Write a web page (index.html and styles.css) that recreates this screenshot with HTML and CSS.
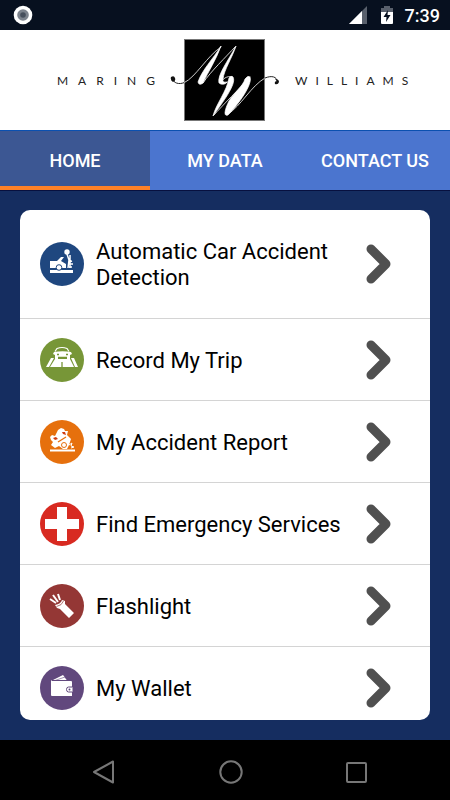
FILE: index.html
```html
<!DOCTYPE html>
<html lang="en">
<head>
<meta charset="utf-8">
<meta name="viewport" content="width=device-width, initial-scale=1">
<title>Maring Williams</title>
<link rel="stylesheet" href="styles.css">
</head>
<body>
<div class="status">
  <svg class="status-record" width="20" height="20" viewBox="0 0 20 20" aria-hidden="true"><circle cx="10" cy="10" r="9.3" fill="#fff"/><circle cx="10" cy="10" r="5.8" fill="#7c838d"/><circle cx="10" cy="10" r="2.8" fill="#464f5c"/></svg>
  <svg width="18" height="18" viewBox="0 0 18 18" aria-hidden="true"><path d="M18 0V18H0Z" fill="#59606c"/><path d="M13 5V18H0Z" fill="#fff"/></svg>
  <svg class="status-battery" width="12" height="18" viewBox="0 0 12 18" aria-hidden="true"><path d="M3 0H9V2H12V7H0V2H3Z" fill="#59606c"/><path d="M0 6H12V17Q12 18 11 18H1Q0 18 0 17Z" fill="#fff"/><path d="M7 4 2.5 11H5.5L5 16 9.5 9H6.5Z" fill="#07101f"/></svg>
  <time class="clock">7:39</time>
</div>
<header class="brand">
  <span class="brand-name brand-left">MARING</span>
  <svg class="monogram" width="110" height="84" viewBox="170 38 110 84" aria-hidden="true">
    <rect x="184.500" y="39.500" width="80" height="81" fill="#000" stroke="#777"/>
    <g fill="none" stroke-linecap="round" stroke-linejoin="round">
      <path d="M173 79C173 83 179 85 184.500 82.500" stroke="#222" stroke-width="1"/>
      <path d="M184.500 82.500C196 77 207 56 221 47" stroke="#ccc" stroke-width="1"/>
      <path d="M203 83C211 71 226 57 235 47M226 83C229 82 230 79 232 77" stroke="#ccc" stroke-width="1"/>
      <path d="M214 115C222 106 240 88 250 77M228 114C241 106 251 86 265 78M221 84C221 79 228 75 232 77" stroke="#ccc" stroke-width="1"/>
      <path d="M265 78C272 75 277 77 277 81" stroke="#222" stroke-width="1"/>
    </g>
    <g fill="#fff" stroke="#fff" stroke-width=".7" stroke-linejoin="round">
      <path d="M221 46C216 60 208 72 203 83Q199 86 198 82C202 70 213 59 221 46Z"/>
      <path d="M236 46C232 58 224 70 223 79Q222 83 227 82Q224 86 219 83C217 75 228 61 236 46Z"/>
      <path d="M233 77C237 84 222 103 213 116C216 104 227 91 229 78Q231 75 233 77Z"/>
      <path d="M250 77C253 84 238 105 228 115C223 117 225 109 229 101C234 93 243 86 245 79Q248 75 250 77Z"/>
    </g>
    <path d="M171 77Q174 75 175 78Q176 81 173 82Q170 80 171 77ZM275 79Q279 79 279 82Q278 85 275 84Q274 81 277 81Z" fill="#111"/>
  </svg>
  <span class="brand-name brand-right">WILLIAMS</span>
</header>
<nav class="tabs" aria-label="Sections">
  <a class="tab tab-active" href="#home" aria-current="page">HOME</a>
  <a class="tab" href="#data">MY DATA</a>
  <a class="tab" href="#contact">CONTACT US</a>
</nav>
<main class="content">
  <ul class="menu">
    <li><a class="item item-tall" href="#detection">
      <svg class="icon" viewBox="0 0 44 44" aria-hidden="true"><circle cx="22" cy="22" r="22" fill="#1f477f"/><path d="M10 19H17L21 15H24L21 19 26 22V26H10ZM10 28H33V31H10Z" fill="#fff"/><circle cx="19" cy="25.500" r="2.800" fill="#fff" stroke="#1f477f"/><circle cx="27" cy="10" r="2.700" fill="#fff"/><path d="M27 12 29 18 28 26M30 13V19M29 20 32 19M29 22H33M29 25H32M30 20V26" stroke="#fff" stroke-width="1.500" fill="none"/></svg>
      <span class="label">Automatic Car Accident Detection</span>
      <svg class="chevron" viewBox="0 0 26 42" aria-hidden="true"><path d="M5 6 20 21 5 36"/></svg></a></li>
    <li><a class="item" href="#trip">
      <svg class="icon" viewBox="0 0 44 44" aria-hidden="true"><circle cx="22" cy="22" r="22" fill="#779637"/><path d="M11 20H14L9 29H6ZM31 20H34L38 29H35Z" fill="#fff"/><path d="M15 21H30L34 29H10Z" fill="#fff"/><path d="M15 13.500 17 10.500Q22 8.500 27 10.500L29 13.500" fill="none" stroke="#fff" stroke-width="1.200"/><path d="M14 14Q22.500 12.500 31 14L32 16 30 17V22H27V20H18V22H15V17L13 16Z" fill="#fff"/><path d="M17 16.500H19M26 16.500H28M18 19.500H27M22 24V29" stroke="#779637" stroke-width="1.300"/></svg>
      <span class="label">Record My Trip</span>
      <svg class="chevron" viewBox="0 0 26 42" aria-hidden="true"><path d="M5 6 20 21 5 36"/></svg></a></li>
    <li><a class="item" href="#report">
      <svg class="icon" viewBox="0 0 44 44" aria-hidden="true"><circle cx="22" cy="22" r="22" fill="#e6700d"/><path d="M10 29.500H35V31.500H10Z" fill="#fff"/><path d="M10 17 12 15 15 16 18 10 21 8 24 9 25 11 28 11 27 15 31 19 29 25 27 29H23L19 26 15 28 11 25 13 22 11 20Z" fill="#fff"/><path d="M13 18 16 17 18 19 15 20ZM22 12 25 12 26 15 23 14Z" fill="#cf3b10"/><path d="M18 22 26 17" stroke="#e6700d" stroke-width="1.300"/><circle cx="24" cy="25" r="2.500" fill="none" stroke="#e6700d"/><path d="M29 25 32 23 31 26 34 27 31 28" stroke="#fff" fill="none"/></svg>
      <span class="label">My Accident Report</span>
      <svg class="chevron" viewBox="0 0 26 42" aria-hidden="true"><path d="M5 6 20 21 5 36"/></svg></a></li>
    <li><a class="item" href="#emergency">
      <svg class="icon" viewBox="0 0 44 44" aria-hidden="true"><circle cx="22" cy="22" r="22" fill="#d82a21"/><path d="M17 5H27V17H39V27H27V39H17V27H5V17H17Z" fill="#fff"/></svg>
      <span class="label">Find Emergency Services</span>
      <svg class="chevron" viewBox="0 0 26 42" aria-hidden="true"><path d="M5 6 20 21 5 36"/></svg></a></li>
    <li><a class="item" href="#flashlight">
      <svg class="icon" viewBox="0 0 44 44" aria-hidden="true"><circle cx="22" cy="22" r="22" fill="#943735"/><path d="M15 21Q21 20 22 16L25 17 25 20 34 29 29 34 20 25 17 24Z" fill="#fff"/><path d="M10 15 16 19M13 11 18 18M18 10 20 16" stroke="#fff" stroke-width="2"/><path d="M16.500 22.500Q22 21.500 23.500 17" stroke="#943735" stroke-width=".7" fill="none"/></svg>
      <span class="label">Flashlight</span>
      <svg class="chevron" viewBox="0 0 26 42" aria-hidden="true"><path d="M5 6 20 21 5 36"/></svg></a></li>
    <li><a class="item" href="#wallet">
      <svg class="icon" viewBox="0 0 44 44" aria-hidden="true"><circle cx="22" cy="22" r="22" fill="#61487d"/><path d="M13 14 23 9 27 14Z" fill="#fff"/><path d="M15 14.500 25 11 27 14" stroke="#61487d" stroke-width=".6" fill="none"/><path d="M11 14 12 15H31Q32 15 32 16V30H12Q11 30 11 29Z" fill="#fff"/><path d="M32.500 21H28.500Q26.500 21 26.500 23.500T28.500 26H32.500" fill="#fff" stroke="#61487d"/><circle cx="29.500" cy="23.500" r="1" fill="#61487d"/></svg>
      <span class="label">My Wallet</span>
      <svg class="chevron" viewBox="0 0 26 42" aria-hidden="true"><path d="M5 6 20 21 5 36"/></svg></a></li>
  </ul>
</main>
<footer class="system">
  <button type="button" aria-label="Back"><svg viewBox="0 0 24 24"><path d="M21 1.500V22.500L2 12Z"/></svg></button>
  <button type="button" aria-label="Home"><svg viewBox="0 0 24 24"><circle cx="12" cy="12" r="10.700"/></svg></button>
  <button type="button" aria-label="Recent apps"><svg viewBox="0 0 24 24"><rect x="2" y="3" width="19" height="19" rx="1"/></svg></button>
</footer>
</body>
</html>
```
FILE: styles.css
```css
* { box-sizing: border-box; }

body {
  margin: 0;
  height: 100vh;
  display: flex;
  flex-direction: column;
  background: #152d60;
  color: #000;
  font-family: Roboto, "Liberation Sans", sans-serif;
}

svg { display: block; flex: none; }
a { color: inherit; text-decoration: none; }

.status {
  flex: none;
  height: 30px;
  display: flex;
  align-items: center;
  padding: 0 10px 0 13px;
  background: #07101f;
  color: #fff;
}
.status-record { margin-right: auto; }
.status-battery { margin: 0 12px 0 14px; }
.clock { font-size: 18px; font-weight: 500; }

.brand {
  flex: none;
  height: 100px;
  display: grid;
  grid-template-columns: 1fr 110px 1fr;
  align-items: center;
  background: #fff;
}
.brand-name {
  font-family: Lato, sans-serif;
  font-size: 12px;
  color: #222;
}
.brand-left {
  padding-right: 5px;
  text-align: right;
  letter-spacing: 10px;
}
.brand-right {
  padding-left: 15px;
  letter-spacing: 8px;
}

.tabs {
  flex: none;
  height: 60px;
  display: grid;
  grid-template-columns: repeat(3, 1fr);
  background: #4b75cf;
  border-top: 1px solid #0b50b0;
}
.tab {
  display: flex;
  align-items: center;
  justify-content: center;
  border-bottom: 4px solid transparent;
  padding-top: 4px;
  color: #fff;
  font-size: 18px;
  font-weight: 500;
}
.tab-active { background: #3c5793; border-color: #ff8127; }

.content {
  flex: 1;
  min-height: 0;
  display: flex;
  padding: 19px 20px 20px;
  border-top: 1px solid #07103f;
}
.menu {
  flex: 1;
  margin: 0;
  padding: 0;
  list-style: none;
  background: #fff;
  border-radius: 10px;
  overflow-y: auto;
  scrollbar-width: none;
}
.item {
  height: 82px;
  display: flex;
  align-items: center;
  padding: 0 38px 0 20px;
  border-bottom: 1px solid #d4d4d4;
}
.item-tall { height: 109px; }
.icon { width: 44px; height: 44px; }
.label {
  flex: 1;
  padding: 2px 8px 0 12px;
  font-size: 22px;
  line-height: 26px;
}
.chevron { width: 26px; height: 42px; }
.chevron path {
  fill: none;
  stroke: #505050;
  stroke-width: 9px;
  stroke-linecap: round;
  stroke-linejoin: round;
}

.system {
  flex: none;
  height: 60px;
  display: flex;
  align-items: center;
  justify-content: space-between;
  padding: 4px 71px 0 82px;
  background: #000;
}
.system button {
  padding: 0 10px;
  border: 0;
  background: none;
}
.system svg {
  width: 24px;
  height: 24px;
  fill: none;
  stroke: #777;
  stroke-width: 2px;
  stroke-linejoin: round;
}
```
